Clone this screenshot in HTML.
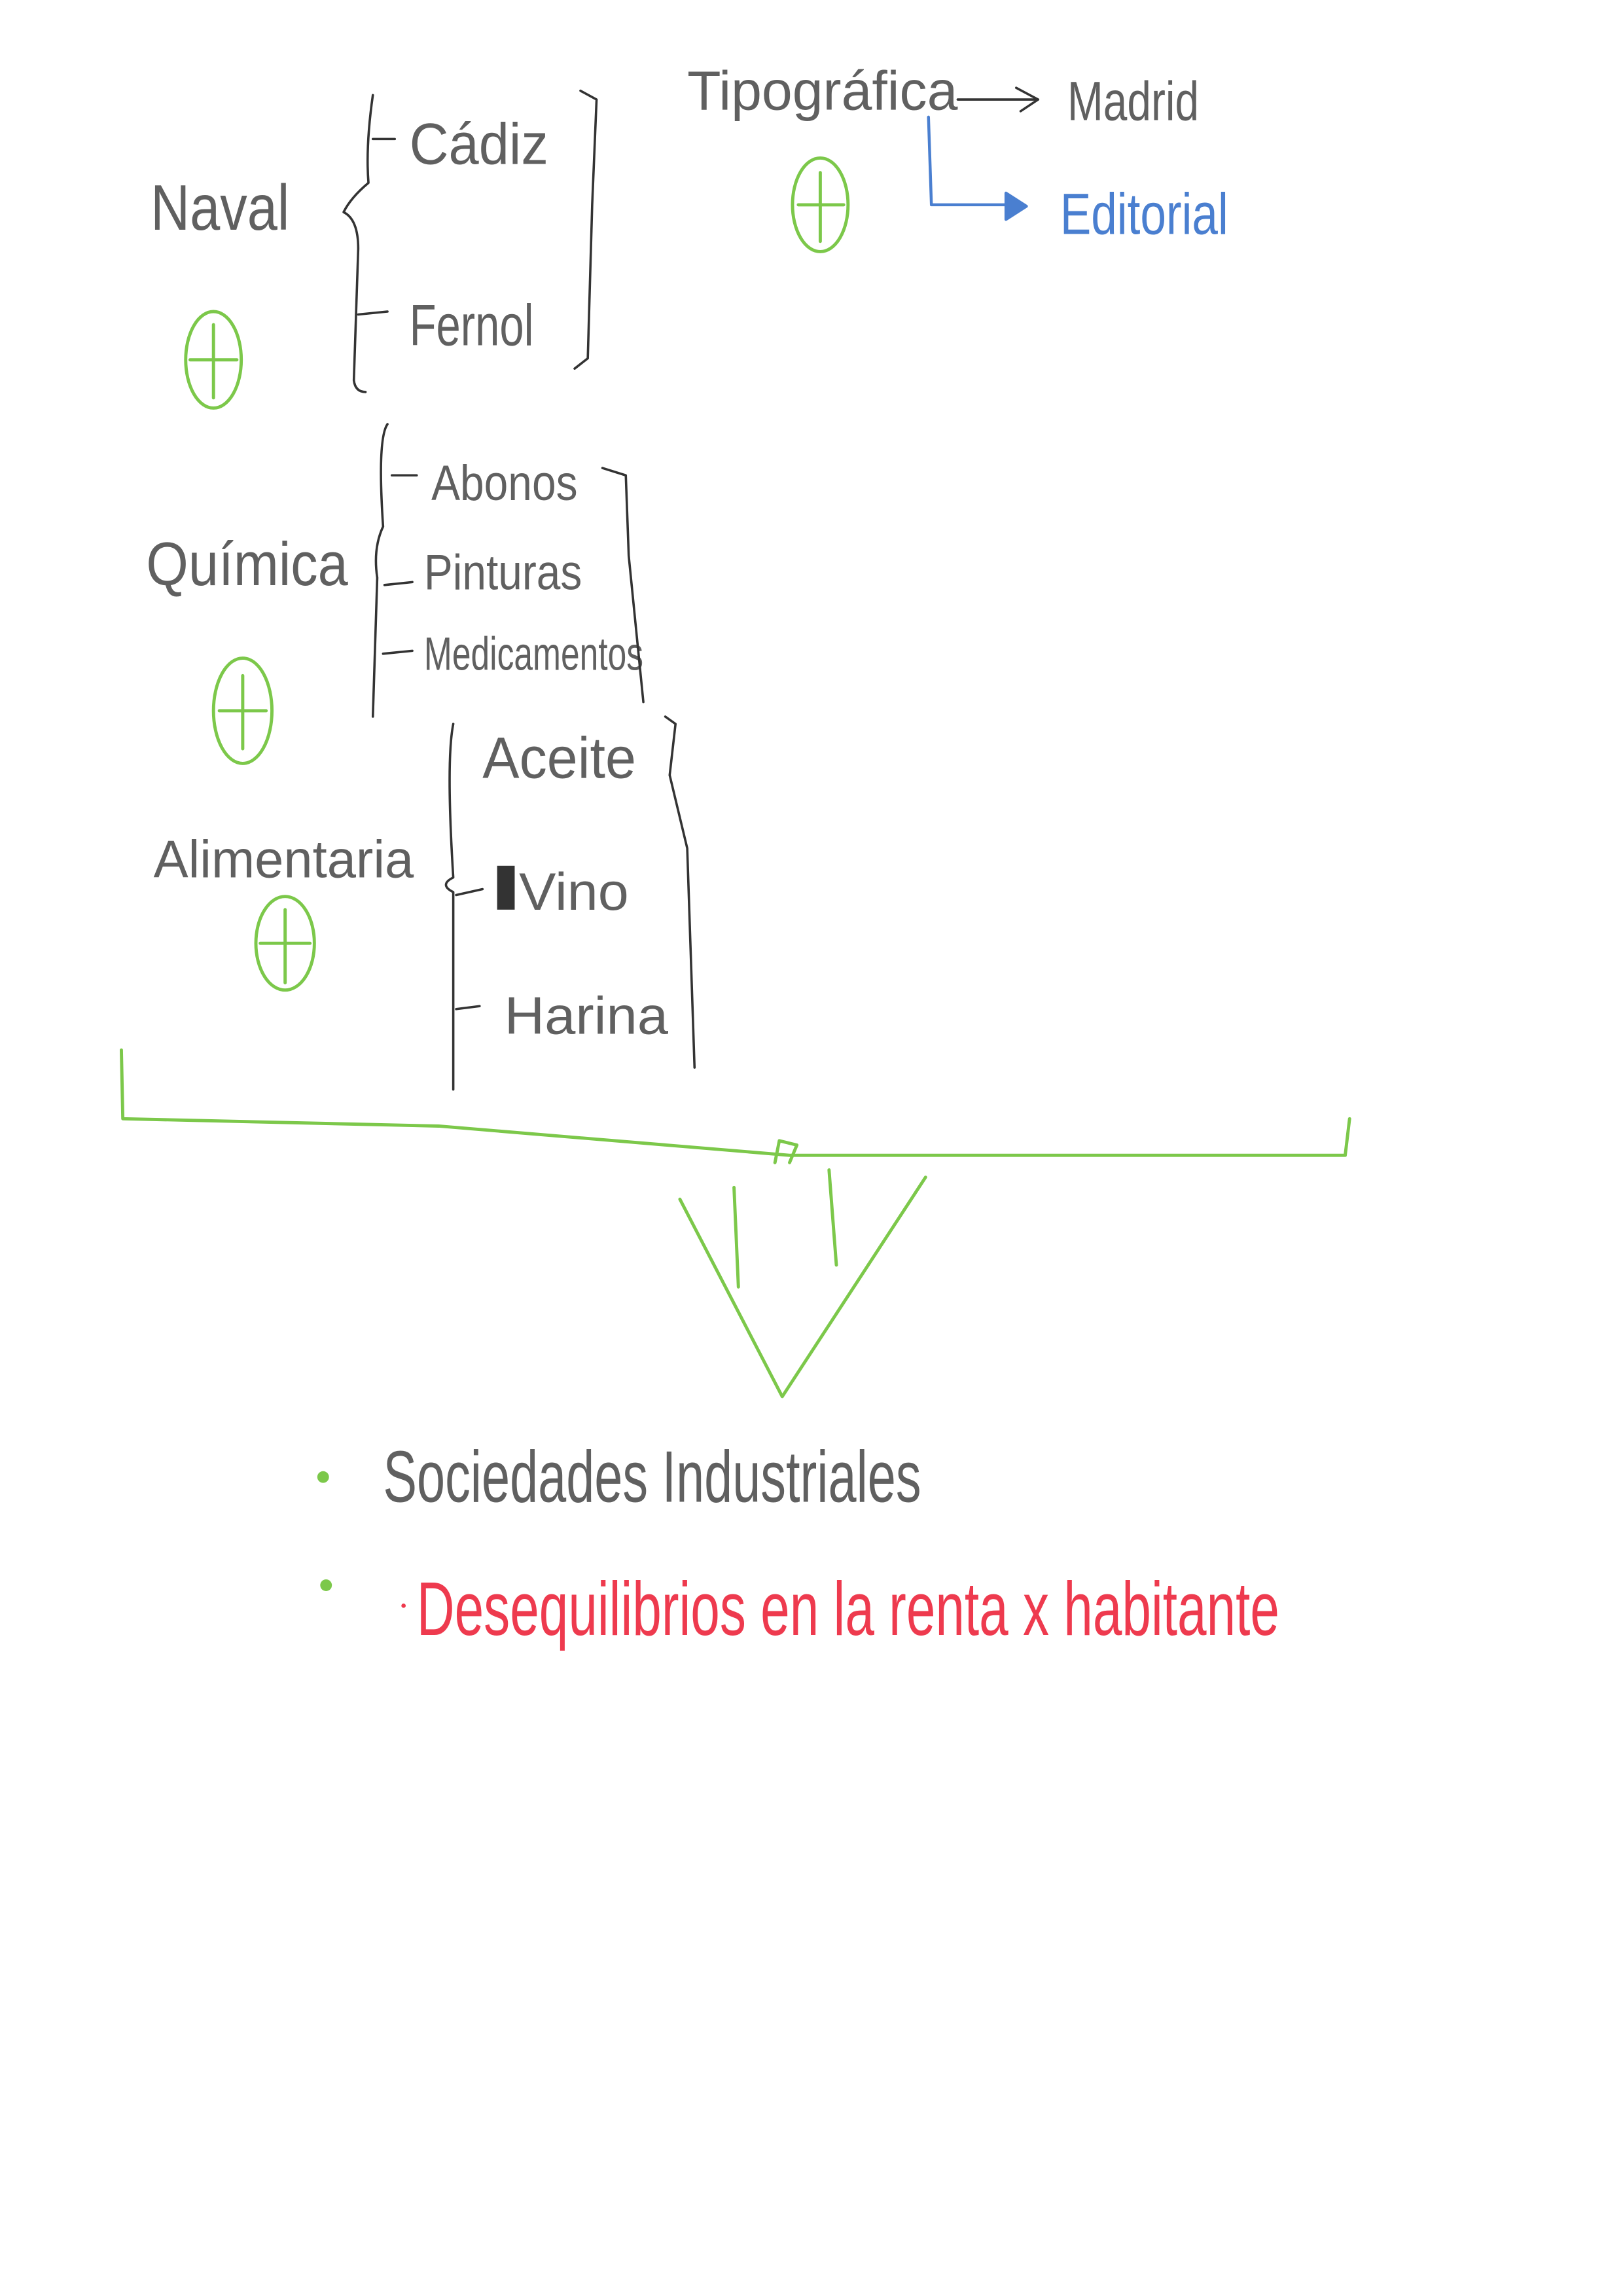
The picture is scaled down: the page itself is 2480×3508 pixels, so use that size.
<!DOCTYPE html>
<html><head><meta charset="utf-8"><style>
html,body{margin:0;padding:0;background:#fff;}
svg{display:block;}
text{font-family:"Liberation Sans",sans-serif;font-weight:normal;}
</style></head><body>
<svg width="2480" height="3508" viewBox="0 0 1110 1570" xmlns="http://www.w3.org/2000/svg" fill="none" stroke-linecap="round" stroke-linejoin="round">
<rect width="1110" height="1570" fill="#fff"/>
<g fill="#444" stroke="none" fill-opacity="0.85">
<text x="103" y="157" font-size="44" textLength="95" lengthAdjust="spacingAndGlyphs">Naval</text>
<text x="280" y="112" font-size="40" textLength="95" lengthAdjust="spacingAndGlyphs">Cádiz</text>
<text x="280" y="236" font-size="40" textLength="85" lengthAdjust="spacingAndGlyphs">Fernol</text>
<text x="470" y="75" font-size="38" textLength="185" lengthAdjust="spacingAndGlyphs">Tipográfica</text>
<text x="730" y="82" font-size="38" textLength="90" lengthAdjust="spacingAndGlyphs">Madrid</text>
<text x="100" y="400" font-size="42" textLength="138" lengthAdjust="spacingAndGlyphs">Química</text>
<text x="295" y="342" font-size="34" textLength="100" lengthAdjust="spacingAndGlyphs">Abonos</text>
<text x="290" y="403" font-size="34" textLength="108" lengthAdjust="spacingAndGlyphs">Pinturas</text>
<text x="290" y="458" font-size="32" textLength="150" lengthAdjust="spacingAndGlyphs">Medicamentos</text>
<text x="105" y="600" font-size="36" textLength="178" lengthAdjust="spacingAndGlyphs">Alimentaria</text>
<text x="330" y="532" font-size="40" textLength="105" lengthAdjust="spacingAndGlyphs">Aceite</text>
<text x="355" y="622" font-size="36" textLength="75" lengthAdjust="spacingAndGlyphs">Vino</text>
<text x="345" y="707" font-size="36" textLength="112" lengthAdjust="spacingAndGlyphs">Harina</text>
<text x="262" y="1027" font-size="50" textLength="368" lengthAdjust="spacingAndGlyphs">Sociedades Industriales</text>
</g>
<text x="725" y="160" font-size="40" fill="#4a7fd0" textLength="115" lengthAdjust="spacingAndGlyphs">Editorial</text>
<text x="285" y="1118" font-size="52" fill="#ee3a4e" textLength="590" lengthAdjust="spacingAndGlyphs">Desequilibrios en la renta x habitante</text>
<circle cx="276" cy="1098" r="1.5" fill="#ee3a4e"/>
<g stroke="#333" stroke-width="1.6">
<path d="M255,65 Q250,100 252,125 Q240,135 235,145 Q245,150 245,170 L242,260 Q243,268 250,268"/>
<path d="M255,95 L270,95"/><path d="M245,215 L265,213"/>
<path d="M397,62 L408,68 L405,140 L402,245 L393,252"/>
<path d="M655,68 L710,68 M695,60 L710,68 L698,76"/>
<path d="M265,290 Q258,300 262,360 Q255,375 258,395 L255,490"/>
<path d="M268,325 L285,325"/><path d="M263,400 L282,398"/><path d="M262,447 L282,445"/>
<path d="M412,320 L428,325 L430,380 L440,480"/>
<path d="M310,495 Q305,520 310,600 Q300,605 310,610 L310,745"/>
<path d="M312,612 L330,608"/><path d="M312,690 L328,688"/>
<path d="M455,490 L462,495 L458,530 L470,580 L475,730"/>
</g>
<rect x="340" y="592" width="12" height="30" fill="#333"/>
<g stroke="#4a7fd0" stroke-width="2">
<path d="M635,80 L637,140 L700,140"/>
<path d="M688,132 L702,141 L688,150 Z" fill="#4a7fd0"/>
</g>
<g stroke="#7cc84a" stroke-width="2.2">
<ellipse cx="146" cy="246" rx="19" ry="33"/><path d="M146,222 L146,272 M130,246 L162,246"/>
<ellipse cx="561" cy="140" rx="19" ry="32"/><path d="M561,118 L561,165 M546,140 L577,140"/>
<ellipse cx="166" cy="486" rx="20" ry="36"/><path d="M166,462 L166,512 M150,486 L182,486"/>
<ellipse cx="195" cy="645" rx="20" ry="32"/><path d="M195,622 L195,672 M178,645 L212,645"/>
<path d="M83,718 L84,765 L300,770 L540,790 L920,790 L923,765"/>
<path d="M530,795 L533,780 L545,783 L540,795"/>
<path d="M465,820 L535,955 L633,805"/>
<path d="M502,812 L505,880"/><path d="M567,800 L572,865"/>
</g>
<circle cx="221" cy="1010" r="4" fill="#7cc84a"/>
<circle cx="223" cy="1084" r="4" fill="#7cc84a"/>
</svg>
</body></html>
